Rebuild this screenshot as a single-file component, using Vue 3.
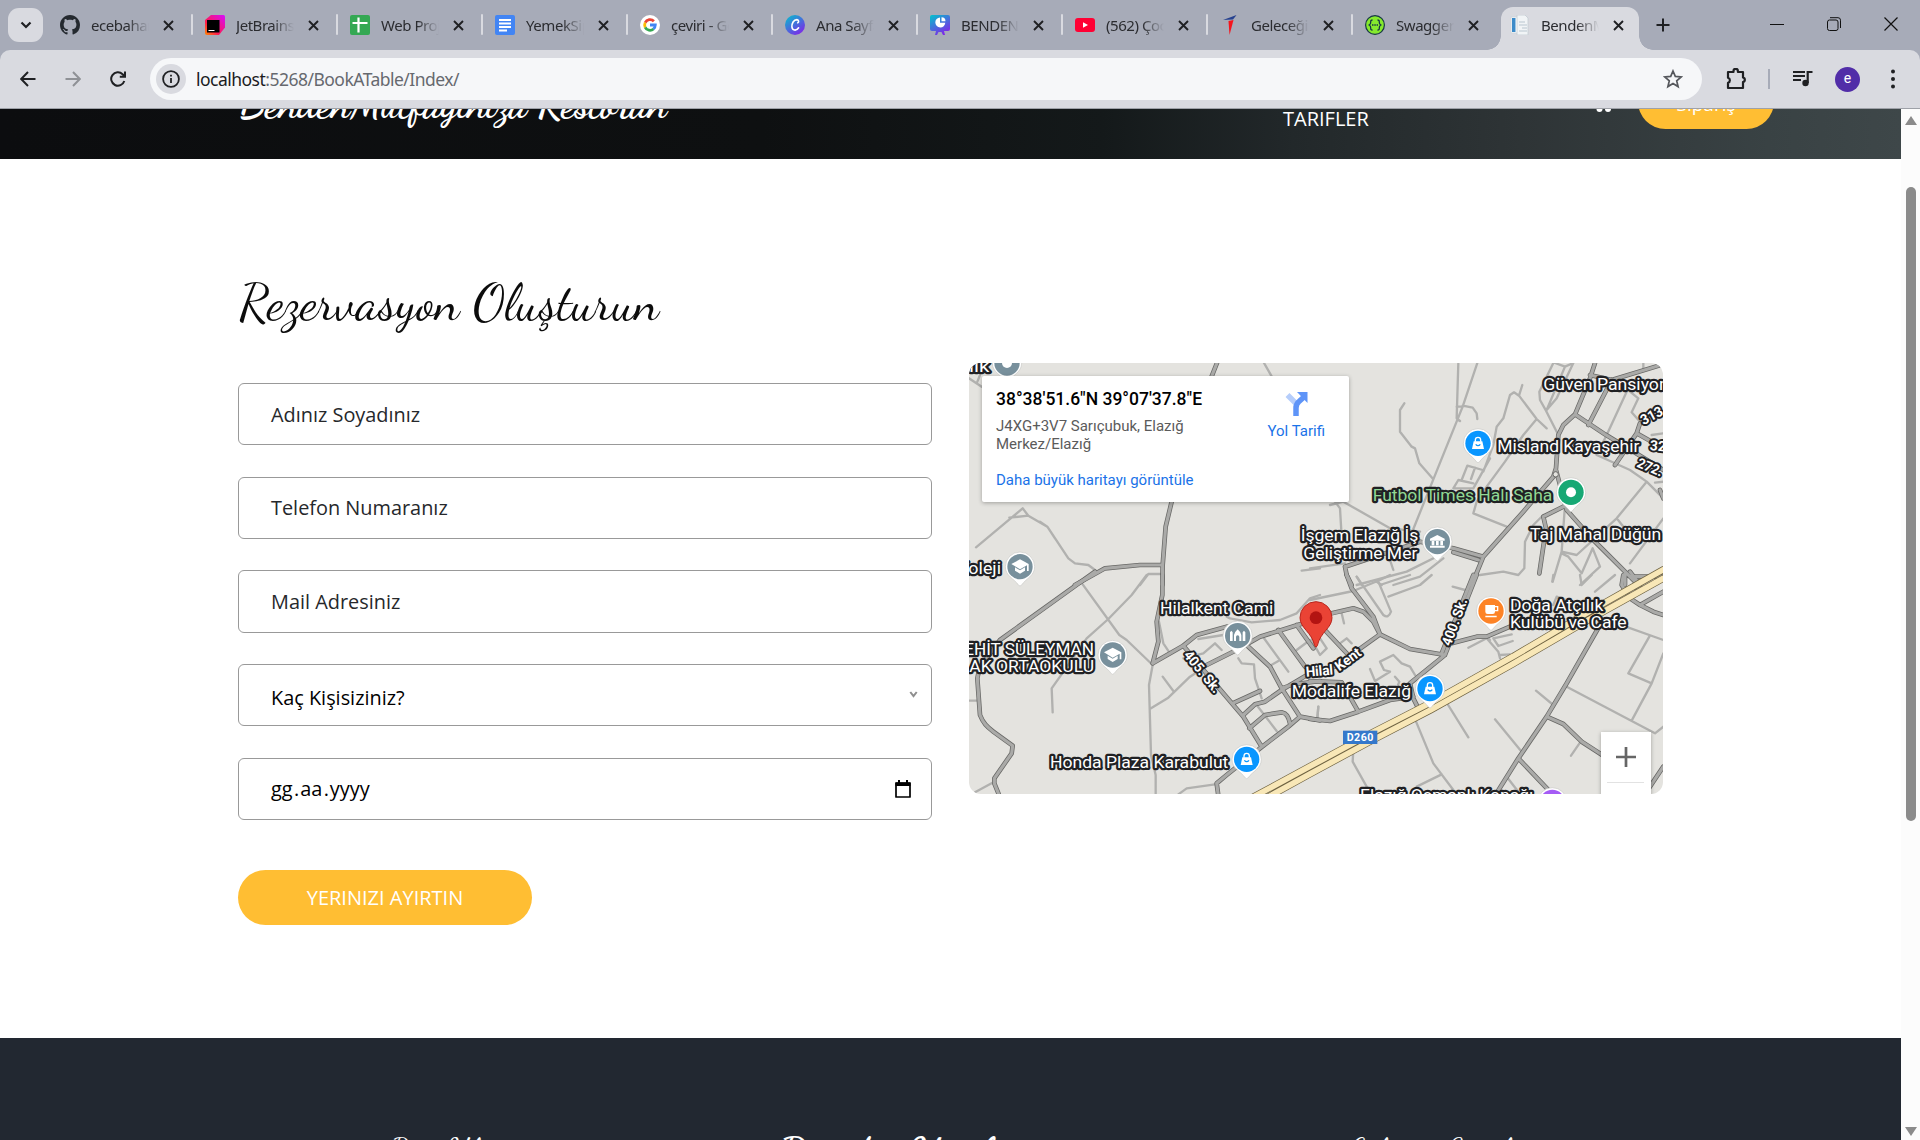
<script setup>
const tabs = [
  { icon: 'github', title: 'ecebahar' },
  { icon: 'jetbrains', title: 'JetBrains' },
  { icon: 'sheets', title: 'Web Proje' },
  { icon: 'docs', title: 'YemekSip' },
  { icon: 'google', title: 'çeviri - Go' },
  { icon: 'canva', title: 'Ana Sayfa' },
  { icon: 'slides', title: 'BENDENM' },
  { icon: 'youtube', title: '(562) Çoc' },
  { icon: 'arrow', title: 'Geleceğin' },
  { icon: 'swagger', title: 'Swagger' },
  { icon: 'page', title: 'BendenMu', active: true },
]

const fields = [
  { id: 'name', label: 'Adınız Soyadınız' },
  { id: 'phone', label: 'Telefon Numaranız' },
  { id: 'mail', label: 'Mail Adresiniz' },
]

/* Map geometry is stored per tile; each tile has its own offset. */
const tiles = [
  {
    at: 'translate(0 0)',
    minor: 'M27 70L65 95M60 60L50 85M912 24L935 64M48 577L188 460L205 482L148 488M205 482L262 515L325 610L345 625L385 630L405 645M240 500L262 515L285 550M540 690L565 657L603 657M1025 647L1080 640',
    major: 'M771 24L755 64M635 440L617 515L608 630L607 690M607 630L540 630L435 640L345 690',
  },
  {
    at: 'translate(1050 0)',
    minor: 'M445 24L440 190L450 198M502 24L458 155L440 155M458 155L370 373L310 522M458 152L488 158L500 175L502 192M283 145L270 165L270 230L305 275L315 280L328 325L370 373M637 90L627 122L612 112L600 120L580 190L560 215L550 270L520 350M627 122L680 192L710 220M680 192L640 240L585 320L530 395L500 440L490 475L590 515M540 310L490 400L430 400L445 375L490 385M455 375L472 332L518 345M495 338L483 372M730 24L688 110L690 135L708 167L745 240M735 24L765 35L710 165M765 35L790 24L740 130L710 165M75 440L90 460L95 545M60 450L100 440L240 520L330 530M0 640L105 625M860 300L960 345L1010 380L1060 430M1010 380L920 490L800 600L755 590M960 110L985 130L965 172L990 200M950 110L890 240L860 300M1060 490L960 625M920 490L960 540M765 450L755 590L728 680M755 595L775 605L815 655L848 580L870 635L810 690M510 660L580 650L625 660L643 640L645 560L670 510L700 480M1000 24L1000 40M390 600L290 650L140 690M400 610L330 665L250 690M1035 383L1060 380M1025 240L1060 235M235 600L250 645M140 665L155 690M200 680L215 690',
    major: 'M855 24L840 70L795 178L760 210L745 240L738 340L730 365L640 470L520 605L485 690M840 60L905 75L1060 28M905 75L835 210M795 178L885 238L1060 345M990 205L980 235L1060 280M980 235L915 330M738 345L750 390L770 465L850 555L960 665L985 690M770 450L700 485L708 520L688 655M105 635L330 560L430 580L520 605M105 635L110 660L125 690M430 592L505 615M960 665L1060 665M945 655L945 690M1050 405L1060 430',
  },
  {
    at: 'translate(0 660)',
    minor: 'M362 20L478 180L500 195L578 270L567 330L573 540L587 600L587 660M560 0L515 60L445 132L380 190L300 305L275 340L278 412M573 400L625 368L690 305L745 270M608 305L640 348M27 377L55 377M45 652L103 620M655 658L680 640L765 628M597 140L610 205L630 235M670 250L730 235L765 205L785 225M715 192L790 180M800 125L810 130L875 142L960 135L1010 115L1050 70L1080 60M835 250L845 265L882 268L885 310L905 370M905 180L985 290M925 275L955 258M890 390L950 468M1075 395L1072 430M1010 225L1050 195',
    major: 'M405 -10L120 195L58 280L52 310L60 420C70 445 80 455 100 470L158 512L155 535L103 610L103 625L118 662M607 0L607 60L590 140L595 200L578 265M578 265L670 212L710 180L800 155L860 160M740 270L830 225L900 185L1020 148L1060 138M670 212L735 290L850 425L905 515M818 385L900 348M850 420L885 388L915 380L965 345L1050 295M865 215L930 275L965 340L1020 425L985 455L900 520L800 600L770 625L775 662M868 460L915 420L965 412C980 415 985 425 990 445M955 165L1035 275M1010 150L1060 220M1020 425L1080 436M965 340L1000 328L1080 318',
  },
  {
    at: 'translate(1050 660)',
    minor: 'M0 75L130 48L210 15L240 0M140 5L220 120Q235 132 243 110L205 20M235 65L330 30L365 0M210 30L300 0M95 115L102 145M90 205L110 190L125 205M30 190L50 220L30 240L5 195M210 260L250 240L275 265L300 275L315 300M210 260L222 285L240 290L195 318L180 282M255 305L268 320L262 335M428 35L465 45M475 218L530 190L565 230L570 250M530 185L540 195M570 240L600 238M550 190L605 178M550 190L565 213L608 198M405 375L475 487M312 425L370 565L430 645M320 635L395 598M130 525L128 560L170 635M555 433L635 530M678 347L730 390M770 335L1035 475L1060 455M955 295L1018 185M955 295L1025 325L965 437M1060 235L1025 325M920 145L1060 195M812 500L783 542M590 605L625 650M730 0L727 20M810 0L815 30L845 0M855 50L915 0M25 395L22 430M730 90L740 65L780 80M640 110L660 90',
    major: 'M0 130L130 100L160 110L190 140L210 178L300 222L405 240M110 0L125 40L190 125L210 178L75 275L0 290M500 0L405 240L300 325L310 370L325 400M490 0L395 235M405 210L500 185L530 185L600 155M0 432L60 438L145 410L240 375L310 365M0 318L95 322L145 410M40 160L115 240M870 150L770 325L710 425L625 550L555 662M710 425L760 447L815 500L880 542M625 550L720 650M1060 50L990 90L960 70L935 30L940 0M990 90L1030 110L1060 120M960 -10L990 30L975 60M1060 575L1010 650',
  },
]
const highway = 'M850 1342L1050 1234L1240 1131L1410 1044L1660 904L1880 774L2110 644M870 1356L1050 1257L1240 1154L1410 1066L1660 926L1880 798L2110 670'

const labels = [
  { x: 27, y: 50, w: 61, t: 'lik' },
  { x: -8, y: 657, w: 131, t: 'Koleji' },
  { x: 1022, y: 559, w: 353, t: 'İşgem Elazığ İş' },
  { x: 1030, y: 611, w: 342, t: 'Geliştirme Mer' },
  { x: 1750, y: 105, w: 376, t: 'Güven Pansiyon' },
  { x: 1612, y: 291, w: 426, t: 'Misland Kayaşehir' },
  { x: 1238, y: 437, w: 539, t: 'Futbol Times Halı Saha', c: '#91d894' },
  { x: 1710, y: 555, w: 394, t: 'Taj Mahal Düğün' },
  { x: 600, y: 777, w: 340, t: 'Hilalkent Cami' },
  { x: -18, y: 899, w: 420, t: 'ŞEHİT SÜLEYMAN' },
  { x: 28, y: 951, w: 374, t: 'AK ORTAOKULU' },
  { x: 270, y: 1239, w: 535, t: 'Honda Plaza Karabulut' },
  { x: 995, y: 1026, w: 358, t: 'Modalife Elazığ' },
  { x: 1650, y: 767, w: 280, t: 'Doğa Atçılık' },
  { x: 1650, y: 820, w: 350, t: 'Kulübü ve Cafe' },
  { x: 1200, y: 1338, w: 520, t: 'Elazığ Osmanlı Konağı' },
]
const streets = [
  { x: 727, y: 950, a: 51, w: 150, t: '405. Sk.' },
  { x: 1484, y: 801, a: -70, w: 148, t: '400. Sk.' },
  { x: 1078, y: 948, a: -5, w: 82, t: 'Hilal' },
  { x: 1164, y: 913, a: -36, w: 86, t: 'Kent' },
  { x: 2075, y: 182, a: -28, w: 70, t: '313' },
  { x: 2094, y: 273, a: 5, w: 48, t: '32' },
  { x: 2070, y: 337, a: 23, w: 80, t: '272.' },
]
const pins = [
  { x: 141, y: 24, c: '#78909c', k: 'dot' },
  { x: 180, y: 635, c: '#78909c', k: 'school' },
  { x: 458, y: 900, c: '#78909c', k: 'school' },
  { x: 1432, y: 560, c: '#78909c', k: 'civic' },
  { x: 833, y: 842, c: '#78909c', k: 'mosque' },
  { x: 1554, y: 265, c: '#0996ff', k: 'shop' },
  { x: 860, y: 1213, c: '#0996ff', k: 'shop' },
  { x: 1410, y: 1001, c: '#0996ff', k: 'shop' },
  { x: 1833, y: 412, c: '#17a874', k: 'dot' },
  { x: 1593, y: 768, c: '#fd8326', k: 'cafe' },
  { x: 1777, y: 1342, c: '#a55cf5', k: 'dot' },
]
</script>

<template>
  <div class="window">
    <header class="tabstrip">
      <button class="tab-search" aria-label="Sekme ara">
        <svg width="12" height="8" viewBox="0 0 12 8"><path d="M1.500 1.500L6 6l4.500-4.500" fill="none" stroke="#1f2023" stroke-width="2.200" /></svg>
      </button>
      <div class="tabs">
        <div v-for="tab in tabs" :key="tab.icon" class="tab" :class="{ active: tab.active }">
          <svg class="favicon" width="20" height="20" viewBox="0 0 20 20">
            <path v-if="tab.icon === 'github'" transform="scale(1.250)" fill="#24292f" d="M8 0C3.580 0 0 3.580 0 8c0 3.540 2.290 6.530 5.470 7.590.4.070.55-.17.55-.38v-1.490c-2.010.37-2.530-.49-2.690-.94-.09-.23-.48-.94-.82-1.130-.28-.15-.68-.52-.01-.53.63-.01 1.080.58 1.230.82.72 1.210 1.870.87 2.330.66.07-.52.28-.87.51-1.070-1.780-.2-3.640-.89-3.640-3.950 0-.87.31-1.590.82-2.150-.08-.2-.36-1.020.08-2.120 0 0 .67-.21 2.200.82.64-.18 1.320-.27 2-.27s1.360.09 2 .27c1.530-1.040 2.200-.82 2.200-.82.44 1.100.16 1.920.08 2.120.51.56.82 1.270.82 2.150 0 3.070-1.870 3.750-3.650 3.950.29.25.54.73.54 1.480v2.200c0 .21.15.46.55.38A8.010 8.010 0 0 0 16 8c0-4.420-3.580-8-8-8z" />
            <g v-else-if="tab.icon === 'jetbrains'">
              <defs><linearGradient id="jb" x1="0" y1="1" x2="1" y2="0"><stop offset="0" stop-color="#ff8a00" /><stop offset=".35" stop-color="#ff1a4f" /><stop offset="1" stop-color="#d60cff" /></linearGradient></defs>
              <path d="M6 0h12.500Q20 0 20 1.500v11L14 20H2q-2 0-2-2V5z" fill="url(#jb)" /><path d="M2 5h12.500v12.500H2z" fill="#000" /><path d="M3.500 15h6v1h-6z" fill="#fff" />
            </g>
            <g v-else-if="tab.icon === 'sheets'"><rect width="20" height="20" rx="2" fill="#34a853" /><path d="M2.500 8h15M8.500 2.500v15" stroke="#fff" stroke-width="2.200" /></g>
            <g v-else-if="tab.icon === 'docs'"><rect width="20" height="20" rx="2" fill="#4285f4" /><path d="M4 5h12M4 8.500h12M4 12h12M4 15.500h8" stroke="#fff" stroke-width="1.800" /></g>
            <g v-else-if="tab.icon === 'google'" fill="none" stroke-width="2.800">
              <circle cx="10" cy="10" r="10" fill="#fff" />
              <path d="M5.200 7.700A5.300 5.300 0 0 1 13.900 6.300" stroke="#ea4335" /><path d="M5.200 12.300a5.300 5.300 0 0 1 0-4.600" stroke="#fbbc05" />
              <path d="M13.500 14A5.300 5.300 0 0 1 5.200 12.300" stroke="#34a853" /><path d="M10 10h5.300a5.300 5.300 0 0 1-1.900 4" stroke="#4285f4" />
            </g>
            <g v-else-if="tab.icon === 'canva'">
              <defs><linearGradient id="cv" x1="0" y1="0" x2=".7" y2="1"><stop offset="0" stop-color="#00c4cc" /><stop offset="1" stop-color="#7d2ae8" /></linearGradient></defs>
              <circle cx="10" cy="10" r="10" fill="url(#cv)" /><path d="M12.800 7.800c1.200-.5 1.200-3-.9-3.200-3.300 0-5.200 4-5 7.200.2 3.600 4.200 4.800 6.700 1" fill="none" stroke="#fff" stroke-width="1.600" stroke-linecap="round" />
            </g>
            <g v-else-if="tab.icon === 'slides'">
              <defs><linearGradient id="sl" x1="0" y1="0" x2=".6" y2="1"><stop offset="0" stop-color="#00c4cc" /><stop offset="1" stop-color="#7d2ae8" /></linearGradient></defs>
              <path d="M2 0h16q2 0 2 2v12q0 2-2 2h-4l1 4h-2l-1.500-3h-3L7 20H5l1-4H2q-2 0-2-2V2q0-2 2-2z" fill="url(#sl)" /><path d="M10 2.500a5 5 0 1 0 5.300 5.300H10z" fill="#fff" /><path d="M11.500 2.200v4h4a4 4 0 0 0-4-4z" fill="#fff" />
            </g>
            <g v-else-if="tab.icon === 'youtube'"><rect y="3" width="20" height="14" rx="3" fill="#ff0033" /><path d="M8 7.300v5.400l5-2.700z" fill="#fff" /></g>
            <g v-else-if="tab.icon === 'arrow'"><path d="M3 5L16.500 0 13 4.500z" fill="#26418f" /><path d="M8.500 6L13.500 5 9.500 20z" fill="#f5141c" /></g>
            <g v-else-if="tab.icon === 'swagger'"><circle cx="10" cy="10" r="9.400" fill="#85ea2d" stroke="#173647" stroke-width="1.200" /><path d="M7.500 5q-2 0-1.800 2t-1.500 3q1.700.8 1.500 3t1.800 2M12.500 5q2 0 1.800 2t1.500 3q-1.700.8-1.500 3t-1.800 2" fill="none" stroke="#173647" stroke-width="1.300" /><path d="M7 10h6" stroke="#173647" stroke-width="1.500" stroke-dasharray="1.500 .8" /></g>
            <g v-else><rect x="1" y="2" width="11" height="16" fill="#fff" stroke="#cfd6dc" /><rect x="2" y="3" width="3.500" height="14" fill="#3c8bc9" /><path d="M7 0h8l3 3v17H7z" fill="#f1f4f6" stroke="#c3ccd3" stroke-width=".8" /><path d="M9 7h6M9 10h8M12 13h5M9 16h8" stroke="#b9c6cf" stroke-width="1.200" /></g>
          </svg>
          <span class="tab-title">{{ tab.title }}</span>
          <svg class="tab-close" width="11" height="11" viewBox="0 0 11 11"><path d="M1 1l9 9M10 1l-9 9" stroke="#1f2023" stroke-width="1.900" /></svg>
        </div>
      </div>
      <svg class="new-tab" width="14" height="14" viewBox="0 0 14 14"><path d="M7 .5v13M.5 7h13" stroke="#1f2023" stroke-width="2" /></svg>
      <div class="window-buttons">
        <svg width="14" height="14" viewBox="0 0 14 14"><path d="M0 7.500h14" stroke="#111" /></svg>
        <svg width="14" height="14" viewBox="0 0 14 14" fill="none" stroke="#111"><rect x=".5" y="3" width="10.500" height="10.500" rx="2" /><path d="M3 .7h8q2.500 0 2.500 2.500V11" /></svg>
        <svg width="14" height="14" viewBox="0 0 14 14"><path d="M.5.5l13 13M13.500.5l-13 13" stroke="#111" stroke-width="1.200" /></svg>
      </div>
    </header>

    <nav class="toolbar">
      <svg class="nav-icon" width="16" height="16" viewBox="0 0 16 16" fill="none" stroke="#1f2023" stroke-width="2"><path d="M15.500 8H1.500M8 1L1.200 8 8 15" /></svg>
      <svg class="nav-icon" width="16" height="16" viewBox="0 0 16 16" fill="none" stroke="#8f9196" stroke-width="2"><path d="M.5 8h14M8 1l6.800 7L8 15" /></svg>
      <svg class="nav-icon" width="16" height="16" viewBox="0 0 16 16" fill="none" stroke="#1f2023" stroke-width="2"><path d="M14.300 10A6.700 6.700 0 1 1 12.600 3.200L15 5.500M15 .5v5.200H9.800" /></svg>
      <div class="omnibox">
        <span class="site-info">
          <svg width="18" height="18" viewBox="0 0 18 18"><circle cx="9" cy="9" r="7.900" fill="none" stroke="#1f2023" stroke-width="1.800" /><path d="M9 8v5M9 4.800v1.800" stroke="#1f2023" stroke-width="1.800" /></svg>
        </span>
        <span class="url"><b>localhost</b>:5268/BookATable/Index/</span>
        <svg class="star" width="20" height="20" viewBox="0 0 20 20"><path d="M10 2l2.300 5.400 5.900.5-4.500 3.900 1.400 5.800L10 14.500l-5.100 3.100 1.400-5.800L1.800 7.900l5.900-.5z" fill="none" stroke="#55575c" stroke-width="1.700" /></svg>
      </div>
      <svg class="puzzle" width="22" height="22" viewBox="0 0 22 22"><path d="M2 4h5.500V3a2.200 2.200 0 0 1 4.400 0v1H17v5.500a2.300 2.300 0 0 1 0 4.500V20H2v-5.200a2.600 2.600 0 0 0 0-5z" fill="none" stroke="#1f2023" stroke-width="2.200" stroke-linejoin="round" /></svg>
      <i class="divider"></i>
      <svg class="playlist" width="20" height="18" viewBox="0 0 20 18"><path d="M0 2h12M0 6h12M0 10h8" stroke="#1f2023" stroke-width="2" /><circle cx="12.500" cy="13" r="3.200" fill="#1f2023" /><path d="M14.700 13V2H19.500" fill="none" stroke="#1f2023" stroke-width="2.200" /></svg>
      <span class="avatar">e</span>
      <svg class="menu" width="4" height="20" viewBox="0 0 4 20" fill="#1f2023"><circle cx="2" cy="2.500" r="2" /><circle cx="2" cy="10" r="2" /><circle cx="2" cy="17.500" r="2" /></svg>
    </nav>

    <div class="viewport">
      <div class="page">
        <section class="hero">
          <svg class="brand" width="440" height="60" viewBox="0 0 440 60"><text x="0" y="39" textLength="428" lengthAdjust="spacingAndGlyphs">BendenMutfağınıza Restoran</text></svg>
          <a class="nav-link">TARIFLER</a>
          <svg class="cart" width="16" height="8" viewBox="0 0 16 8" fill="#fff"><circle cx="3.500" cy="4" r="3" /><circle cx="12" cy="4" r="3" /></svg>
          <a class="order">Sipariş</a>
        </section>

        <section class="booking">
          <h2 class="heading">
            <svg width="440" height="84" viewBox="0 0 440 84"><text x="1" y="50" textLength="420" lengthAdjust="spacingAndGlyphs">Rezervasyon Oluşturun</text></svg>
          </h2>
          <div class="columns">
            <form class="form" @submit.prevent>
              <div v-for="field in fields" :key="field.id" class="field">{{ field.label }}</div>
              <div class="field select">
                <span>Kaç Kişisiziniz?</span>
                <svg width="9" height="7" viewBox="0 0 8 7"><path d="M.8 1L4 5.200 7.200 1" fill="none" stroke="#8f8f8f" stroke-width="2" /></svg>
              </div>
              <div class="field date">
                <span>gg<i>.</i>aa<i>.</i>yyyy</span>
                <svg width="16" height="18" viewBox="0 0 16 18"><path d="M1 3h14v14H1z" fill="none" stroke="#000" stroke-width="1.700" stroke-linejoin="round" /><path d="M.5 2.500h15V6H.5zM3 0h2v3H3zM11 0h2v3h-2z" /></svg>
              </div>
              <button class="submit">YERINIZI AYIRTIN</button>
            </form>

            <div class="map">
              <svg class="map-canvas" width="694" height="431" viewBox="27 24 2082 1293">
                <rect x="27" y="24" width="2082" height="1293" fill="#e4e3df" />
                <g fill="none" stroke-linejoin="round" stroke-linecap="round">
                  <path v-for="tile in tiles" :key="'n' + tile.at" :transform="tile.at" :d="tile.minor" stroke="#b1b1af" stroke-width="7" />
                  <path v-for="tile in tiles" :key="'c' + tile.at" :transform="tile.at" :d="tile.major" stroke="#686866" stroke-width="14" />
                  <path v-for="tile in tiles" :key="'f' + tile.at" :transform="tile.at" :d="tile.major" stroke="#aaaaa8" stroke-width="9.500" />
                  <path :d="highway" stroke="#6f6342" stroke-width="21" />
                  <path :d="highway" stroke="#f8e7b7" stroke-width="17" />
                </g>
                <circle cx="1787" cy="358" r="8" fill="#e4e3df" stroke="#686866" stroke-width="3" />
                <g class="labels">
                  <text v-for="label in labels" :key="label.t" :x="label.x" :y="label.y" :textLength="label.w" :fill="label.c || '#fff'" lengthAdjust="spacingAndGlyphs">{{ label.t }}</text>
                </g>
                <g class="streets">
                  <text v-for="street in streets" :key="street.t" :transform="`translate(${street.x} ${street.y}) rotate(${street.a})`" :textLength="street.w" lengthAdjust="spacingAndGlyphs" y="14">{{ street.t }}</text>
                </g>
                <g v-for="pin in pins" :key="pin.x" :transform="`translate(${pin.x} ${pin.y})`">
                  <path d="M-44 0A44 44 0 0 1 44 0C44 28 18 35 4 56Q0 60-4 56C-18 35-44 28-44 0z" fill="#fff" stroke="#c9c9c6" stroke-width="2" />
                  <circle r="38" :fill="pin.c" />
                  <circle v-if="pin.k === 'dot'" r="15" fill="#fff" />
                  <path v-else-if="pin.k === 'school'" d="M0-22L26-8V13H21V-4L0 8-26-8zM-15 2L0 11 15 2V12L0 21-15 12z" fill="#fff" />
                  <g v-else-if="pin.k === 'shop'"><path d="M-13-6H13L18 17H-18z" fill="#fff" /><path d="M-8-5V-10A8 8 0 0 1 8-10V-5" fill="none" stroke="#fff" stroke-width="4" /><path d="M-7 3Q0 11 7 3" fill="none" :stroke="pin.c" stroke-width="4" /></g>
                  <path v-else-if="pin.k === 'civic'" d="M0-20L22-9V-3H-22V-9zM-17-2H-9V11H-17zM-4-2H4V11H-4zM9-2H17V11H9zM-22 12H22V18H-22z" fill="#fff" />
                  <path v-else-if="pin.k === 'mosque'" d="M-23-10L-19-15-15-10V16H-23zM15-10L19-15 23-10V16H15zM-11-2Q-10-10 0-19 10-10 11-2V16H5V4A5 5 0 0 0-5 4V16H-11z" fill="#fff" />
                  <g v-else><path d="M-17-18H12V2Q12 9 5 9H-10Q-17 9-17 2zM-17 14H17V19H-17z" fill="#fff" /><path d="M12-13H20V-1H12" fill="none" stroke="#fff" stroke-width="4" /></g>
                </g>
                <g transform="translate(1068 788)">
                  <path d="M-48 0A48 48 0 0 1 48 0C48 32 13 42 4 84Q0 93-4 84C-13 42-48 32-48 0z" fill="#ea4335" stroke="#b9261d" stroke-width="3" />
                  <circle r="19" fill="#b31412" />
                </g>
                <rect x="1149" y="1127" width="103" height="40" fill="#3478cb" />
                <text class="shield" x="1160" y="1159" textLength="80">D260</text>
              </svg>
              <div class="place-card">
                <div class="place">
                  <strong>38°38'51.6"N 39°07'37.8"E</strong>
                  <p>J4XG+3V7 Sarıçubuk, Elazığ<br />Merkez/Elazığ</p>
                  <a>Daha büyük haritayı görüntüle</a>
                </div>
                <div class="directions">
                  <svg width="24" height="24" viewBox="0 0 24 24"><path d="M3.500 3L12 11.500" stroke="#b5cdfb" stroke-width="5.500" /><path d="M12 24v-8q0-4 3-6.500l5-4.500" fill="none" stroke="#5e94f8" stroke-width="5.500" /><path d="M13 0h10.500v11z" fill="#5e94f8" /></svg>
                  <span>Yol Tarifi</span>
                </div>
              </div>
              <div class="zoom"><svg width="20" height="20" viewBox="0 0 20 20"><path d="M10 0v20M0 10h20" stroke="#666" stroke-width="2.700" /></svg></div>
            </div>
          </div>
        </section>

        <footer class="footer">
          <svg width="1300" height="60" viewBox="0 0 1300 60">
            <text x="88" y="34" font-size="30" textLength="135">Bize Ulaşın</text>
            <text class="bold" x="476" y="41" font-size="42" textLength="337">BendenMutfağınıza</text>
            <text x="1046" y="34" font-size="30" textLength="190">Çalışma Saatleri</text>
          </svg>
        </footer>
      </div>
      <aside class="scrollbar">
        <i class="up"></i>
        <i class="thumb"></i>
        <i class="down"></i>
      </aside>
    </div>
  </div>
</template>

<style>
body { margin: 0; overflow: hidden; }
</style>

<style scoped>
* { box-sizing: border-box; }
svg { display: block; flex: none; }
.window { width: 1920px; height: 1140px; display: flex; flex-direction: column; overflow: hidden; background: #a7abb8; font-family: "Open Sans", sans-serif; }

.tabstrip { height: 50px; display: flex; flex: none; }
.tab-search { width: 35px; height: 34px; margin: 8px 0 0 8px; padding: 0; border: 0; border-radius: 11px; background: #d9dae0; display: flex; align-items: center; justify-content: center; }
.tabs { display: flex; margin-left: 4px; }
.tab { position: relative; width: 145px; height: 50px; padding: 0 18px 0 13px; display: flex; align-items: center; }
.tab::after { content: ""; position: absolute; right: -1px; top: 14px; width: 2px; height: 21px; border-radius: 2px; background: #d9dae0; }
.tab:nth-child(10)::after { display: none; }
.favicon { margin-right: 11px; }
.tab-title { width: 58px; overflow: hidden; white-space: nowrap; font: 15px/22px "Noto Sans", sans-serif; letter-spacing: -.45px; color: #2b2c30; -webkit-mask-image: linear-gradient(90deg, #000 62%, transparent); mask-image: linear-gradient(90deg, #000 62%, transparent); }
.tab-close { margin-left: auto; }
.tab.active { width: 138px; height: 43px; margin: 7px 0 0 4px; padding: 0 15px 7px 9px; border-radius: 12px 12px 0 0; background: #d9dae0; }
.tab.active::before, .tab.active::after { content: ""; position: absolute; top: auto; bottom: 0; width: 14px; height: 14px; border-radius: 0; }
.tab.active::before { left: -14px; background: radial-gradient(circle at 0 0, transparent 13.500px, #d9dae0 14px); }
.tab.active::after { right: -14px; background: radial-gradient(circle at 100% 0, transparent 13.500px, #d9dae0 14px); }
.new-tab { margin: 18px 0 0 17px; }
.window-buttons { display: flex; gap: 43px; margin: 17px 22px 0 auto; }

.toolbar { height: 59px; flex: none; display: flex; align-items: center; background: #d9dae0; border-bottom: 1px solid #9ea1a8; border-radius: 10px 10px 0 0; padding-left: 20px; }
.nav-icon { margin-right: 29px; }
.omnibox { width: 1552px; height: 42px; margin-left: -5px; padding: 0 19px 0 6px; border-radius: 21px; background: #f6f7f9; display: flex; align-items: center; }
.site-info { width: 30px; height: 30px; border-radius: 50%; background: #d9dae0; display: flex; align-items: center; justify-content: center; }
.url { margin-left: 10px; font: 17.500px/24px "Noto Sans", sans-serif; letter-spacing: -.52px; color: #66696f; }
.url b { font-weight: 400; color: #1b1c1f; }
.star { margin-left: auto; }
.puzzle { margin-left: 24px; }
.divider { width: 2px; height: 20px; margin-left: 20px; background: #a7abb8; }
.playlist { margin-left: 23px; }
.avatar { width: 25px; height: 25px; margin-left: 22px; border-radius: 50%; background: #512da8; color: #fff; font: 14px/23px Roboto, sans-serif; text-align: center; }
.menu { margin-left: 31px; }

.viewport { flex: 1; display: flex; min-height: 0; background: #fff; }
.page { width: 1901px; overflow: hidden; }
.hero { height: 50px; display: flex; align-items: flex-start; overflow: hidden; background: linear-gradient(90deg, #0c0d0f 0%, #0e1011 40%, #14191a 58%, #22282a 68%, #2e3436 80%, #394244 93%, #3e4749 100%); color: #fff; }
.brand { margin: -31px 0 0 239px; }
.brand text { font: 700 38px "Dancing Script", "Liberation Serif", cursive; fill: #fff; }
.nav-link { margin: -4px 0 0 604px; width: 86px; font-size: 20px; line-height: 27px; }
.cart { margin: -4px 0 0 227px; }
.order { width: 136px; height: 55px; margin: -35px 0 0 26px; border-radius: 28px; background: #ffbe33; text-align: center; font-size: 19px; line-height: 60px; }

.booking { height: 879px; padding: 110px 0 0 238px; }
.heading { height: 94px; margin: 0; }
.heading text { font: 52px "Dancing Script", "Liberation Serif", cursive; fill: #0c0c0c; }
.columns { display: flex; gap: 37px; align-items: flex-start; }
.form { width: 694px; margin-top: 20px; }
.field { height: 62.400px; margin-bottom: 31.300px; padding: 0 19px 0 32px; border: 1px solid #999; border-radius: 6px; display: flex; align-items: center; justify-content: space-between; font-size: 19.900px; color: #26282b; }
.select { color: #000; padding: 4px 13px 0 32px; }
.select svg { margin-top: -6px; }
.date { color: #000; padding: 0 20px 0 32px; }
.date span { margin-top: -1px; }
.date i { font-style: normal; margin: 0 .8px 0 1.500px; }
.submit { display: block; width: 294px; height: 55px; margin-top: 49.800px; padding: 0; border: 0; border-radius: 28px; background: #ffbe33; color: #fff; font: 20px/55px "Open Sans", sans-serif; }

.map { position: relative; width: 694px; height: 431px; border-radius: 12px; overflow: hidden; }
.labels text { font: 50px Roboto, sans-serif; stroke: #202124; stroke-width: 13px; stroke-linejoin: round; paint-order: stroke; }
.streets text { font: 700 42px Roboto, sans-serif; fill: #fff; stroke: #202124; stroke-width: 12px; stroke-linejoin: round; paint-order: stroke; text-anchor: middle; }
.shield { font: 700 32px Roboto, sans-serif; fill: #fff; }
.place-card { position: absolute; left: 13px; top: 13px; width: 367px; height: 126px; padding: 13px 24px 0 14px; border-radius: 2px; background: #fff; box-shadow: 0 1px 4px rgba(0, 0, 0, .3); display: flex; justify-content: space-between; font: 15px/18px Roboto, sans-serif; }
.place strong { display: block; font-size: 17.500px; line-height: 20px; font-weight: 500; color: #000; }
.place p { margin: 8px 0 18px; color: #5b5b5b; }
.place a, .directions { color: #1a73e8; }
.directions { display: flex; flex-direction: column; align-items: center; gap: 6px; padding-top: 3px; }
.zoom { position: absolute; right: 12px; top: 369px; width: 50px; height: 70px; padding: 15px; background: #fff; box-shadow: 0 1px 4px rgba(0, 0, 0, .3); }
.zoom::after { content: ""; position: absolute; left: 6px; right: 7px; top: 50px; height: 1px; background: #e2e2e2; }

.footer { height: 102px; padding: 74px 0 0 303px; overflow: hidden; background: #222831; }
.footer svg { overflow: visible; margin-top: 14px; }
.footer text { font-family: "Dancing Script", "Liberation Serif", cursive; fill: #fff; }
.footer .bold { font-weight: 700; }

.scrollbar { width: 19px; height: 1031px; background: #fcfcfc; display: flex; flex-direction: column; align-items: center; }
.up { border: 6px solid transparent; border-top: 0; border-bottom: 9px solid #8b8b8b; margin-top: 7px; }
.thumb { width: 10px; height: 634px; margin-top: 62px; border-radius: 5px; background: #8b8b8b; }
.down { border: 6px solid transparent; border-bottom: 0; border-top: 9px solid #8b8b8b; margin: auto 0 4px; }
</style>
